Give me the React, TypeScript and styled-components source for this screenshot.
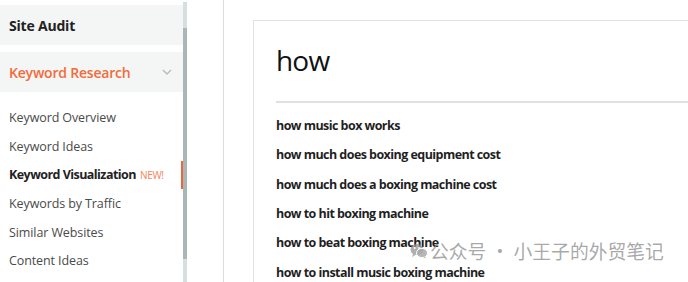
import React from "react";
import styled, { createGlobalStyle } from "styled-components";

const Global = createGlobalStyle`
  html, body { margin: 0; padding: 0; background: #ffffff; }
  body { font-family: "Open Sans", "Noto Sans", sans-serif; }
`;

const Page = styled.div`
  position: relative;
  display: flex;
  width: 688px;
  height: 282px;
  overflow: hidden;
  background: #fff;
`;

const Sidebar = styled.div`
  display: flex;
  flex: 0 0 187px;
  height: 100%;
`;

const Menu = styled.nav`
  flex: 0 0 183px;
  display: flex;
  flex-direction: column;
  padding-top: 5px;
`;

const SectionBox = styled.div<{ $active?: boolean }>`
  height: 40px;
  display: flex;
  align-items: center;
  justify-content: space-between;
  padding: 0 11px 0 9px;
  margin-bottom: 7px;
  background: #f4f5f5;
  font-family: "Open Sans", sans-serif;
  font-weight: ${(p) => (p.$active ? 600 : 700)};
  font-size: 14px;
  letter-spacing: -0.2px;
  color: ${(p) => (p.$active ? "#f26b3a" : "#222")};
`;

const Items = styled.ul`
  list-style: none;
  margin: 4.5px 0 0;
  padding: 0;
`;

const Item = styled.li<{ $active?: boolean }>`
  height: 28.6px;
  display: flex;
  align-items: center;
  padding-left: 9px;
  font-size: 12.5px;
  font-weight: ${(p) => (p.$active ? 700 : 400)};
  color: ${(p) => (p.$active ? "#222" : "#4a4a4a")};
  border-right: 2px solid ${(p) => (p.$active ? "#f0643a" : "transparent")};
  letter-spacing: ${(p) => (p.$active ? "-0.55px" : "-0.1px")};
`;

const NewTag = styled.span`
  margin-left: 4px;
  font-size: 10px;
  font-weight: 400;
  letter-spacing: -0.3px;
  color: #f7845a;
`;

const Track = styled.div`
  flex: 0 0 4px;
  margin-top: 2px;
  padding-top: 26px;
  background: #d7dede;
`;

const Thumb = styled.div`
  height: 231px;
  background: #a9b7b7;
`;

const Main = styled.main`
  flex: 1;
  display: flex;
  margin-left: 36px;
  padding-top: 2px;
  border-left: 1px solid #dcdcdc;
`;

const Card = styled.section`
  margin-left: 29px;
  margin-top: 18px;
  flex: 1;
  border-left: 1px solid #e0e2e2;
  border-top: 1px solid #e0e2e2;
  padding-left: 22px;
`;

const Heading = styled.h1`
  margin: 0;
  padding-top: 19px;
  height: 61px;
  font-family: "Open Sans", sans-serif;
  font-weight: 400;
  font-size: 28px;
  line-height: 40px;
  letter-spacing: -0.8px;
  color: #111;
  border-bottom: 2px solid #dde1e1;
`;

const Results = styled.ul`
  list-style: none;
  margin: 0;
  padding: 8px 0 0;
`;

const Result = styled.li`
  height: 29.3px;
  display: flex;
  align-items: center;
  font-size: 12.5px;
  font-weight: 700;
  color: #1f1f1f;
  letter-spacing: -0.55px;
  white-space: nowrap;
`;

const Watermark = styled.div`
  position: absolute;
  left: 410px;
  top: 239px;
  display: flex;
  align-items: center;
  gap: 2px;
  white-space: nowrap;
  font-family: "Noto Sans CJK SC", sans-serif;
  font-size: 18.8px;
  line-height: 24px;
  color: rgba(140, 140, 140, 0.75);
  pointer-events: none;
`;

const Chevron = () => (
  <svg width="10" height="6" viewBox="0 0 10 6" fill="none">
    <path d="M1 1l4 4 4-4" stroke="#b3bcbc" strokeWidth="1.4" />
  </svg>
);

const WeChat = () => (
  <svg width="18" height="16" viewBox="0 0 18 16">
    <ellipse cx="7" cy="6.5" rx="6.5" ry="5.5" fill="rgba(150,150,150,0.75)" />
    <path d="M3 11l-1 3 3.5-2z" fill="rgba(150,150,150,0.75)" />
    <ellipse cx="12" cy="10" rx="5.5" ry="4.6" fill="rgba(170,170,170,0.85)" stroke="#fff" strokeWidth="1" />
    <path d="M15 13.5l1.2 2-3-1.2z" fill="rgba(170,170,170,0.85)" />
    <circle cx="4.8" cy="5" r="0.9" fill="#fff" />
    <circle cx="9" cy="5" r="0.9" fill="#fff" />
  </svg>
);

const menuItems = [
  "Keyword Overview",
  "Keyword Ideas",
  "Keyword Visualization",
  "Keywords by Traffic",
  "Similar Websites",
  "Content Ideas",
];

const results = [
  "how music box works",
  "how much does boxing equipment cost",
  "how much does a boxing machine cost",
  "how to hit boxing machine",
  "how to beat boxing machine",
  "how to install music boxing machine",
];

export default function App() {
  return (
    <>
      <Global />
      <Page>
        <Sidebar>
          <Menu>
            <SectionBox>Site Audit</SectionBox>
            <SectionBox $active>
              Keyword Research
              <Chevron />
            </SectionBox>
            <Items>
              {menuItems.map((m) => (
                <Item key={m} $active={m === "Keyword Visualization"}>
                  {m}
                  {m === "Keyword Visualization" && <NewTag>NEW!</NewTag>}
                </Item>
              ))}
            </Items>
          </Menu>
          <Track>
            <Thumb />
          </Track>
        </Sidebar>
        <Main>
          <Card>
            <Heading>how</Heading>
            <Results>
              {results.map((r) => (
                <Result key={r}>{r}</Result>
              ))}
            </Results>
          </Card>
        </Main>
        <Watermark>
          <WeChat />
          <span>公众号 · 小王子的外贸笔记</span>
        </Watermark>
      </Page>
    </>
  );
}
